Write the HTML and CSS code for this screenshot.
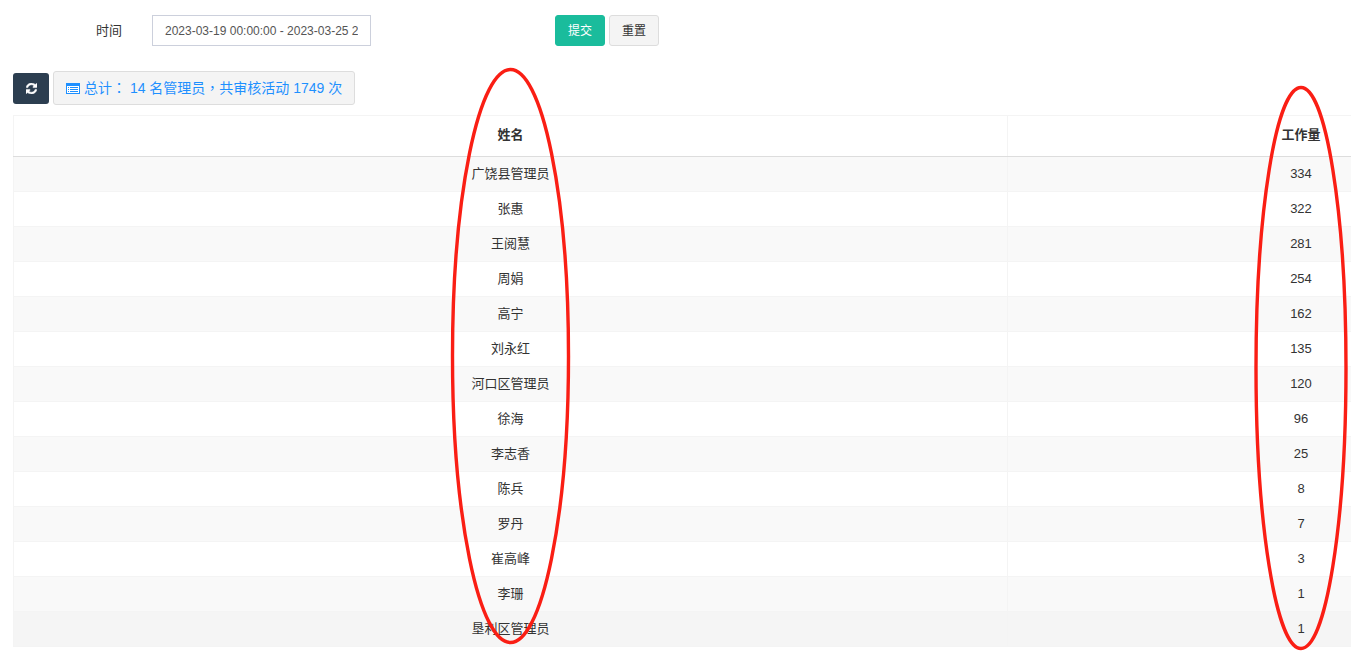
FILE: index.html
```html
<!DOCTYPE html>
<html lang="zh-CN">
<head>
<meta charset="utf-8">
<title>工作量统计</title>
<link rel="stylesheet" href="styles.css">
</head>
<body>
<div class="page">
  <form class="filter">
    <label class="filter-label">时间</label>
    <input class="filter-input" type="text" value="2023-03-19 00:00:00 - 2023-03-25 23:59:59">
    <div class="filter-actions">
      <button class="btn btn-submit" type="button">提交</button>
      <button class="btn btn-reset" type="button">重置</button>
    </div>
  </form>
  <div class="toolbar">
    <button class="btn-refresh" type="button" aria-label="刷新">
      <svg class="icon-refresh" viewBox="0 0 1536 1536"><path fill="currentColor" stroke="currentColor" stroke-width="70" d="M1511 928q0 5-1 7-64 268-268 434.5t-478 166.5q-146 0-282.5-55t-243.5-157l-129 129q-19 19-45 19t-45-19-19-45v-448q0-26 19-45t45-19h448q26 0 45 19t19 45-19 45l-137 137q71 66 161 102t187 36q134 0 250-65t186-179q11-17 53-117 8-23 30-23h192q13 0 22.5 9.5t9.5 22.5zm25-800v448q0 26-19 45t-45 19h-448q-26 0-45-19t-19-45 19-45l138-138q-148-137-349-137-134 0-250 65t-186 179q-11 17-53 117-8 23-30 23h-199q-13 0-22.5-9.5t-9.5-22.5v-7q65-268 270-434.5t480-166.5q146 0 284 55.5t245 156.5l130-129q19-19 45-19t45 19 19 45z"/></svg>
    </button>
    <div class="summary">
      <svg class="icon-list" viewBox="0 0 14 11" shape-rendering="crispEdges"><path fill="#fff" d="M1 3h12v7H1z"/><path fill="currentColor" d="M0 0h14v11H0zM1 3v7h12V3z" fill-rule="evenodd"/><path fill="currentColor" d="M2 4h1v1H2zM4 4h8v1H4zM2 6h1v1H2zM4 6h8v1H4zM2 8h1v1H2zM4 8h8v1H4z"/></svg>
      <span>总计<span class="punct" lang="zh-Hant">：</span> 14 名管理员<span class="punct" lang="zh-Hant">，</span>共审核活动 1749 次</span>
    </div>
  </div>
  <table class="data-table">
    <thead>
      <tr><th>姓名</th><th>工作量</th></tr>
    </thead>
    <tbody>
      <tr><td>广饶县管理员</td><td>334</td></tr>
      <tr><td>张惠</td><td>322</td></tr>
      <tr><td>王阅慧</td><td>281</td></tr>
      <tr><td>周娟</td><td>254</td></tr>
      <tr><td>高宁</td><td>162</td></tr>
      <tr><td>刘永红</td><td>135</td></tr>
      <tr><td>河口区管理员</td><td>120</td></tr>
      <tr><td>徐海</td><td>96</td></tr>
      <tr><td>李志香</td><td>25</td></tr>
      <tr><td>陈兵</td><td>8</td></tr>
      <tr><td>罗丹</td><td>7</td></tr>
      <tr><td>崔高峰</td><td>3</td></tr>
      <tr><td>李珊</td><td>1</td></tr>
      <tr class="row-hover"><td>垦利区管理员</td><td>1</td></tr>
    </tbody>
  </table>
</div>
<svg class="annotations" viewBox="0 0 1351 651" width="1351" height="651">
  <ellipse cx="510.5" cy="356" rx="58" ry="286.5"/>
  <ellipse cx="1301" cy="368" rx="45" ry="280.5"/>
</svg>
</body>
</html>
```
FILE: styles.css
```css
* { box-sizing: border-box; }
html, body { margin: 0; height: 100%; overflow: hidden; background: #fff; }
body {
  position: relative;
  font-family: "Liberation Sans", "Noto Sans CJK SC", sans-serif;
  font-size: 13px;
  color: #333;
}
.page { width: 1595px; padding: 15px 0 0 13px; }

.filter { display: flex; align-items: center; height: 31px; }
.filter-label { width: 109px; text-align: right; padding-bottom: 2px; }
.filter-input {
  width: 219px; height: 31px; margin-left: 30px; padding: 0 12px;
  border: 1px solid #ccd0dc; background: #fff; color: #555;
  font: inherit; font-size: 12px; outline: none;
}
.filter-actions { display: flex; gap: 4px; margin-left: 184px; }
.btn {
  width: 50px; height: 31px; padding: 0 0 3px; border-radius: 3px;
  font: inherit; font-size: 12px; cursor: pointer;
}
.btn-submit { background: #1abc9c; border: 1px solid #1abc9c; color: #fff; }
.btn-reset { background: #f4f4f4; border: 1px solid #ddd; color: #333; }

.toolbar { display: flex; align-items: center; gap: 4px; margin-top: 25px; height: 34px; }
.btn-refresh {
  display: flex; align-items: center; justify-content: center;
  width: 36px; height: 31px; padding: 0; margin-top: 1px;
  background: #2c3e50; border: 0; border-radius: 3px; color: #fff;
}
.icon-refresh { width: 11px; height: 11px; }
.summary {
  display: flex; align-items: center; gap: 4px;
  width: 302px; height: 34px; padding: 0 12px 2px;
  background: #f4f4f4; border: 1px solid #ddd; border-radius: 3px;
  color: #1e90ff; font-size: 14px; white-space: nowrap;
}
.punct { font-family: "Noto Sans CJK TC", sans-serif; }
.icon-list { width: 14px; height: 11px; flex: none; margin-top: 2px; }

.data-table {
  width: 1582px; margin-top: 10px; table-layout: fixed;
  border-collapse: collapse; border: 1px solid #f4f4f4;
}
.data-table th, .data-table td {
  text-align: center; vertical-align: middle;
  border: 1px solid #f4f4f4; border-width: 1px 1px 0 1px;
}
.data-table th:first-child, .data-table td:first-child { width: 994px; }
.data-table th { height: 41px; padding: 0 0 5px; font-weight: 700; color: #333; border-bottom: 1px solid #ddd; }
.data-table td { height: 35px; padding: 0 0 2px; color: #333; }
.data-table td:first-child { padding-bottom: 4px; }
.data-table tbody tr:nth-child(odd) { background: #f9f9f9; }
.data-table tbody tr.row-hover { background: #f5f5f5; }

.annotations { position: absolute; left: 0; top: 0; pointer-events: none; }
.annotations ellipse { fill: none; stroke: #fa1e14; stroke-width: 3.4; }
```
